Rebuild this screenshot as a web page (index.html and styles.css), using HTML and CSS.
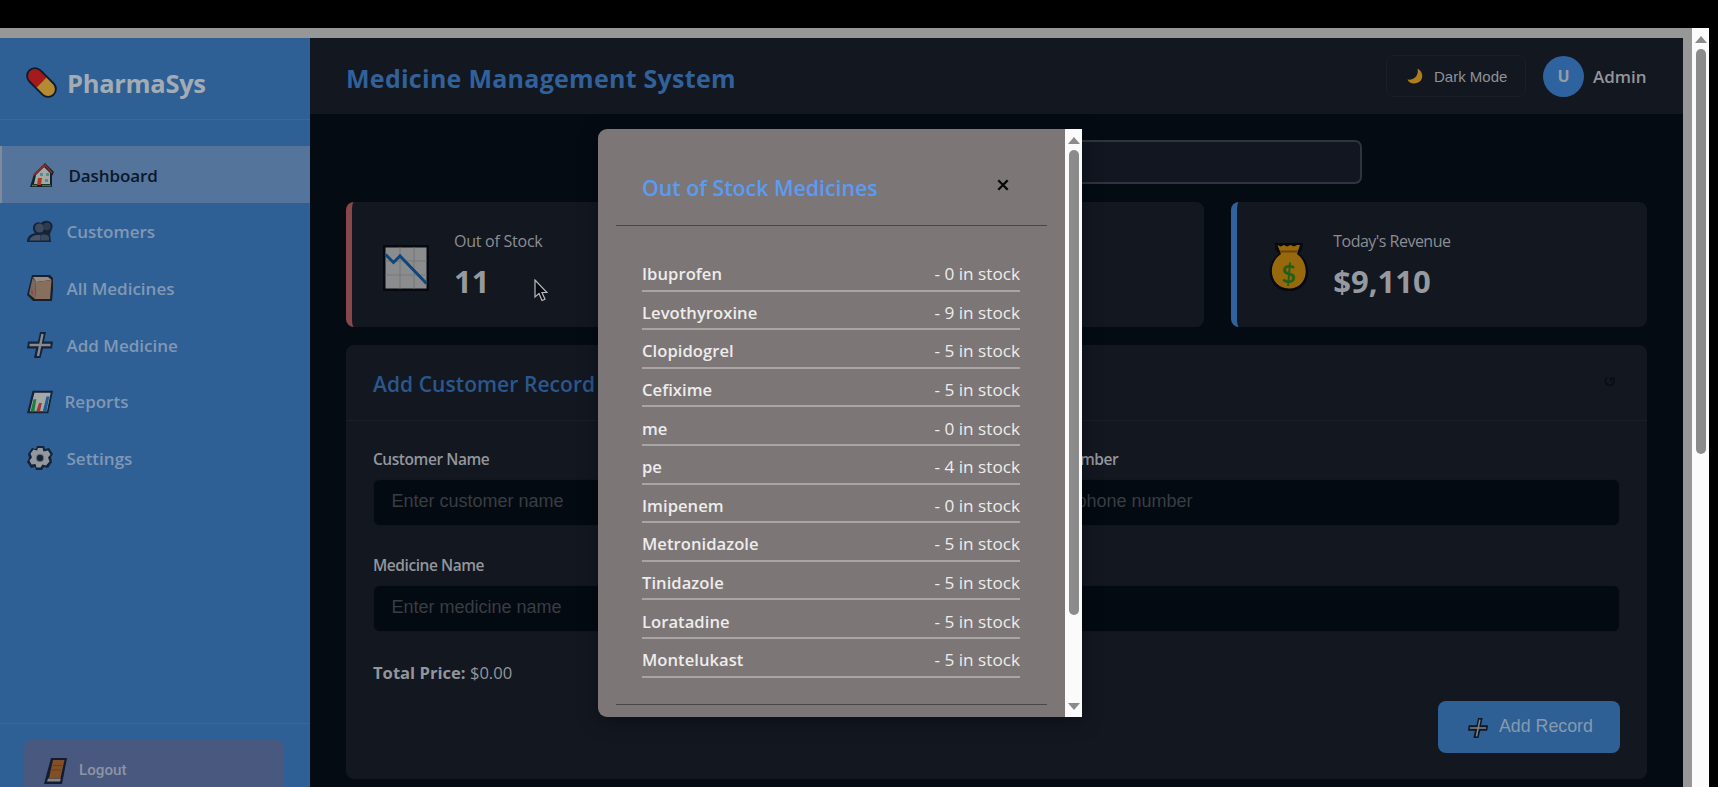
FILE: index.html
```html
<!DOCTYPE html>
<html lang="en">
<head>
<meta charset="utf-8">
<title>PharmaSys</title>
<link rel="stylesheet" href="styles.css">
</head>
<body>
<div class="viewport">
  <div class="app">
    <aside class="sidebar">
      <div class="brand">
        <svg class="brand-icon" viewBox="0 0 32 32"><g transform="rotate(45 16 16)"><rect x="-1.500" y="7.500" width="35" height="17" rx="8.500" fill="#101a2c"/><path d="M16 9.300H7a6.700 6.700 0 0 0 0 13.400H16z" fill="#a31b1c"/><path d="M16 9.300h9a6.700 6.700 0 0 1 0 13.400H16z" fill="#b48a32"/></g></svg>
        <span class="brand-name">PharmaSys</span>
      </div>
      <nav class="menu">
        <a class="item active"><svg class="ico" viewBox="0 0 26 26"><path d="M5 12 16 1l9 9-2 4v11H1z" fill="#15202b"/><path d="M7 13l8-8 6 6v11H5z" fill="#a5a9a4"/><path d="M5 13 16 3l7 8" fill="none" stroke="#8d2a2a" stroke-width="1.800"/><path d="M9 16h4l-1 7H8z" fill="#a83a28"/><path d="M11 11h3v3h-3zM17 11h3v3h-3zM16 17h3v3h-3z" fill="#4c8f9b"/><path d="M3 23.500h5M13 23.500h9" stroke="#3c7a36" stroke-width="1.500"/></svg><span>Dashboard</span></a>
        <a class="item"><svg class="ico" viewBox="0 0 26 26"><path d="M8 14C3 9 8 1 14 4c5-5 14-1 11 6l-2 5 1 8H0c0-5 3-8 8-9z" fill="#152438"/><circle cx="12.500" cy="9" r="4.500" fill="#3c4a5b"/><circle cx="20" cy="7.500" r="3.700" fill="#2d3b4c"/><path d="M2.500 21.500c1-5 6-6 11-5.500v5.500z" fill="#46546a"/><path d="M14 16c5-1 7 0 8 2v3.500h-8z" fill="#39485b"/></svg><span>Customers</span></a>
        <a class="item"><svg class="ico" viewBox="0 0 26 26"><path d="M5 0h18l4 4-2 22H6L0 20z" fill="#17212e"/><path d="M6 2h15l3.500 3L9 7z" fill="#9a8c82"/><path d="M9 7l15.500-2L23 24H8z" fill="#86705d"/><path d="M5.500 3 9 7 8 24l-6-5z" fill="#79695f"/><path d="M4 15l2 1v4l-2-2z" fill="#a3403d"/></svg><span>All Medicines</span></a>
        <a class="item"><svg class="ico" viewBox="0 0 26 26"><path d="M13 0h6l-2 9.500h9l-1 7h-9L13.500 26H7l2-9.500H0l1-7h10z" fill="#14233a"/><path d="M15.500 2 11 24M2.500 13h21" stroke="#898b8e" stroke-width="2.400" fill="none"/></svg><span>Add Medicine</span></a>
        <a class="item"><svg class="ico" viewBox="0 0 28 26"><path d="M6 1h22l-5 24H0z" fill="#14233a"/><path d="M8 3h17.500l-4 20H3z" fill="#a4a8a8"/><path d="M7 10h3L8 23H4z" fill="#18803a"/><path d="M13 14h3l-2 9h-4z" fill="#a33632"/><path d="M21 7h3l-3 16h-4z" fill="#1d5c98"/></svg><span class="nudge">Reports</span></a>
        <a class="item"><svg class="ico" viewBox="0 0 26 26"><path d="M10 1h7l1 3 4-1 4 6-2 3 1 5-4 6-4-1-2 3H9l-1-3-4 1-4-6 2-4-1-4 4-6 4 1z" fill="#14233a"/><path d="M11 3h4.500l1 3.500 4.500-1 2.500 4-2.500 3 1.500 4-3.500 4-3.500-1-2 3h-4l-1-3.500-4 .5-2-4 2.500-3-1.500-4 3-4 3.500 1z" fill="#92989e"/><circle cx="13" cy="13" r="3.800" fill="#14233a" stroke="#6e7680" stroke-width="1"/></svg><span>Settings</span></a>
      </nav>
      <div class="side-foot">
        <div class="logout"><svg class="door" viewBox="0 0 23 26"><path d="M7 0h16l-5 26H0z" fill="#131a33"/><path d="M9 2h11.500L16.500 20H5z" fill="#835026"/><path d="M9 7.500h9M8 12h9" stroke="#6c3d1b" stroke-width="1"/><path d="M4 20.500h13l-1 3H3z" fill="#8c8378"/></svg><span>Logout</span></div>
      </div>
    </aside>
    <main class="main">
      <header class="topbar">
        <h1>Medicine Management System</h1>
        <div class="top-right">
          <div class="mode"><svg class="moon" viewBox="0 0 16 16"><path d="M10.500.5C17 4 16.500 12 11 14.500 7 16.500 2 15.500.5 11.500 7 12.500 12 8 10.500.5z" fill="#b07d1b"/></svg><span>Dark Mode</span></div>
          <div class="avatar">U</div>
          <span class="admin">Admin</span>
        </div>
      </header>
      <div class="content">
        <div class="search"></div>
        <section class="stats">
          <div class="stat red">
            <svg class="chart" viewBox="0 0 46 46"><path d="M0 0h46v46H0z" fill="#06090f"/><path d="M2.500 2.500h41v41h-41z" fill="#8b8c8d"/><path d="M17 2.500v41M31 2.500v41M2.500 16h41M2.500 30h41" stroke="#77797b" stroke-width="1.200"/><path d="M2.500 9.500l8 8L17 11l26.500 27.500" fill="none" stroke="#0d4678" stroke-width="3"/></svg>
            <div><div class="stat-label">Out of Stock</div><div class="stat-num">11</div></div>
          </div>
          <div class="stat"></div>
          <div class="stat blue">
            <svg class="bag" viewBox="0 0 40 50"><path d="M6 1h28l-1 6-3 5c14 9 13 37-10 37S-4 21 10 12L6 7z" fill="#06090f"/><path d="M8.500 3l3 1.500L15 3l3 1.500L21.500 3l3.500 1.500 3-1.500h3l-3 9c14 10 11 34.500-8 34.500S-3 22 12 12z" fill="#98690c"/><path d="M11 9.500h18" stroke="#6f4208" stroke-width="2"/></svg>
            <span class="dollar">$</span>
            <div><div class="stat-label revenue">Today's Revenue</div><div class="stat-num money">$9,110</div></div>
          </div>
        </section>
        <section class="card">
          <div class="card-head"><h2>Add Customer Record</h2><svg class="reset" viewBox="0 0 14 14"><path d="M3.500 2.500A5 5 0 1 0 11 4M8 3h4.500M8 3v4" fill="none" stroke="#080c13" stroke-width="1.800"/></svg></div>
          <div class="form">
            <div class="field"><label>Customer Name</label><input placeholder="Enter customer name"></div>
            <div class="field"><label>Phone Number</label><input placeholder="Enter phone number"></div>
            <div class="field"><label>Medicine Name</label><input placeholder="Enter medicine name"></div>
            <div class="field"><label>Quantity</label><input></div>
          </div>
          <div class="total"><b>Total Price:</b> $0.00</div>
          <div class="actions"><div class="add"><svg class="plus" viewBox="0 0 26 26"><path d="M13 0h6l-2 9.500h9l-1 7h-9L13.500 26H7l2-9.500H0l1-7h10z" fill="#0d1828"/><path d="M15.500 2 11 24M2.500 13h21" stroke="#858381" stroke-width="2" fill="none"/></svg><span>Add Record</span></div></div>
        </section>
      </div>
    </main>
  </div>
  <div class="scroll page-scroll"><i class="up"></i><b class="thumb"></b></div>
</div>

<div class="modal">
  <div class="modal-body">
    <div class="modal-head"><h2>Out of Stock Medicines</h2><svg class="close" viewBox="0 0 12 12"><path d="M1.300 1.300l9.400 9.400M10.700 1.300l-9.400 9.400" stroke="#060606" stroke-width="2.300"/></svg></div>
    <ul class="list">
      <li><b>Ibuprofen</b><span>- 0 in stock</span></li>
      <li><b>Levothyroxine</b><span>- 9 in stock</span></li>
      <li><b>Clopidogrel</b><span>- 5 in stock</span></li>
      <li><b>Cefixime</b><span>- 5 in stock</span></li>
      <li><b>me</b><span>- 0 in stock</span></li>
      <li><b>pe</b><span>- 4 in stock</span></li>
      <li><b>Imipenem</b><span>- 0 in stock</span></li>
      <li><b>Metronidazole</b><span>- 5 in stock</span></li>
      <li><b>Tinidazole</b><span>- 5 in stock</span></li>
      <li><b>Loratadine</b><span>- 5 in stock</span></li>
      <li><b>Montelukast</b><span>- 5 in stock</span></li>
    </ul>
    <div class="modal-foot"></div>
  </div>
  <div class="scroll"><i class="up"></i><b class="thumb"></b><i class="down"></i></div>
</div>
<svg class="cursor" viewBox="0 0 14 23"><path d="M1 1v17l4-3.500 3 7 3-1.300-3-6.700h5z" fill="#06090f" stroke="#b9babc" stroke-width="1.200"/></svg>
</body>
</html>
```
FILE: styles.css
```css
* { box-sizing: border-box; }
body {
  margin: 0;
  height: 787px;
  overflow: hidden;
  background: #000;
  padding: 28px 9px 0 0;
  font-family: "Open Sans", "Noto Sans", sans-serif;
  color: #92969c;
}
h1, h2, ul { margin: 0; padding: 0; }
svg { display: block; flex: none; }
span, h1, h2, label, li { white-space: nowrap; }

.viewport { display: flex; height: 759px; }
.app { flex: 1; display: flex; background: #979797; padding: 10px 9px 0 0; }

.sidebar { width: 310px; background: #2e6096; display: flex; flex-direction: column; }
.brand { height: 82px; display: flex; align-items: center; padding: 8px 0 0 25px; gap: 9px; border-bottom: 1px solid #38689c; }
.brand-icon { width: 33px; height: 33px; }
.brand-name { font-size: 25.500px; font-weight: 700; letter-spacing: -0.3px; color: #a3abb5; }
.menu { padding-top: 26px; display: flex; flex-direction: column; }
.item { height: 56.600px; display: flex; align-items: center; padding: 2px 0 0 27px; gap: 13.500px; font-size: 17px; font-weight: 600; color: #8198b4; }
.item.active { background: #54749b; color: #0b1829; border-left: 2px solid #7d8b9d; letter-spacing: -0.1px; }
.ico { width: 26px; height: 26px; }
.nudge { margin-left: -2px; }
.side-foot { margin-top: auto; height: 64px; border-top: 1px solid #37689d; padding: 16px 26px 0 24px; overflow: hidden; }
.logout { height: 60px; background: #49587f; border-radius: 8px; display: flex; align-items: center; padding-left: 20px; gap: 12px; font: 500 15.200px Roboto, "Liberation Sans", sans-serif; color: #8d94a6; }
.door { width: 23px; height: 26px; margin-top: 1px; }

.main { flex: 1; background: #040b13; }
.topbar { height: 76px; background: #131720; display: flex; align-items: center; justify-content: space-between; padding: 0 36px; }
h1 { font-size: 25px; font-weight: 700; letter-spacing: 0.270px; color: #31619a; line-height: 32px; padding-top: 4px; }
.top-right { display: flex; align-items: center; }
.mode { width: 140px; height: 42px; border: 1px solid #1a1e28; border-radius: 7px; display: flex; align-items: center; gap: 11px; padding-left: 20px; font: 500 15px "Liberation Sans", sans-serif; color: #8f9297; margin-right: 17px; }
.moon { width: 16px; height: 16px; }
.avatar { width: 41px; height: 41px; border-radius: 50%; background: #2e639f; display: flex; align-items: center; justify-content: center; font-size: 16px; font-weight: 700; color: #959da7; }
.admin { margin-left: 9px; font-size: 17px; font-weight: 600; width: 54px; padding-top: 1px; }

.content { padding: 26px 36px 0; }
.search { width: 731px; height: 44px; margin: 0 auto; border: 2px solid #30353d; border-radius: 7px; background: #111620; }
.stats { display: grid; grid-template-columns: 1fr 1fr 1fr; gap: 27px; margin-top: 17.500px; }
.stat { position: relative; height: 125px; background: #131720; border-radius: 8px; display: flex; align-items: center; }
.stat.red { border-left: 6px solid #89474a; }
.stat.blue { border-left: 6px solid #32629b; }
.chart { width: 46px; height: 46px; margin: 8px 25px 0 31px; }
.bag { width: 40px; height: 50px; margin: 5px 24px 0 32px; }
.dollar { position: absolute; left: 44px; top: 55px; font: 700 25px/32px Lato, sans-serif; color: #216018; }
.stat-label { font-size: 16px; font-weight: 500; line-height: 24px; letter-spacing: -0.250px; color: #8b8e93; margin-top: 2px; }
.stat-label.revenue { letter-spacing: -0.520px; }
.stat-num { font-size: 31px; font-weight: 700; line-height: 42px; margin-top: 7px; color: #969a9f; }

.card { height: 434px; margin-top: 18.500px; background: #131720; border-radius: 8px; padding-top: 1px; }
.card-head { height: 75px; border-bottom: 1px solid #1a1f29; padding: 0 31px 0 27px; display: flex; justify-content: space-between; align-items: center; }
.card-head h2 { font-size: 21px; font-weight: 600; letter-spacing: 0.060px; color: #2b578c; padding-top: 2px; }
.reset { width: 12px; height: 13px; margin-bottom: 3px; }
.form { display: grid; grid-template-columns: 1fr 1fr; column-gap: 27px; padding: 26px 27px 0; }
.field { height: 106px; display: flex; flex-direction: column; }
label { font-size: 15.500px; font-weight: 600; letter-spacing: -0.450px; line-height: 24px; margin-bottom: 8px; }
input { height: 47px; border: 1px solid #10151e; border-radius: 7px; background: #040a12; padding: 0 18px 2px 17.500px; font: 18px "Liberation Sans", sans-serif; color: #92969c; }
input::placeholder { color: #3a3d42; opacity: 1; }
.total { padding-left: 27px; font-size: 16.600px; line-height: 24px; margin-top: 2px; }
.actions { display: flex; justify-content: flex-end; padding: 16px 27px 0; }
.add { width: 182px; height: 52px; border-radius: 8px; background: #2e6096; display: flex; align-items: center; padding-left: 30px; gap: 11px; font: 500 17.800px "Liberation Sans", sans-serif; color: #8799af; }
.add span { padding-bottom: 1px; }
.plus { width: 20px; height: 20px; margin-top: 2px; }

.scroll { width: 17px; background: #fbfbfb; display: flex; flex-direction: column; align-items: center; }
.up { border: 6px solid transparent; border-bottom: 7px solid #8b8b8b; border-top: 0; margin-top: 8px; }
.down { border: 6px solid transparent; border-top: 7px solid #8b8b8b; border-bottom: 0; margin: auto 0 7px; }
.thumb { width: 10px; height: 465px; margin-top: 6px; border-radius: 5px; background: #8b8b8b; }
.page-scroll .thumb { height: 405px; }

.modal { position: absolute; left: 598px; top: 129px; width: 484px; height: 588px; display: flex; background: #7c7676; border-radius: 9px 0 0 9px; overflow: hidden; box-shadow: 0 4px 20px rgba(0,0,0,.35); }
.modal-body { flex: 1; padding: 18px; }
.modal-head { height: 79px; border-bottom: 1px solid #4a4547; padding: 0 38px 0 26px; display: flex; justify-content: space-between; align-items: center; }
.modal-head h2 { font-size: 21.300px; font-weight: 600; color: #5a9cf5; line-height: 28px; margin-top: 3px; }
.close { width: 12px; height: 12px; margin-bottom: 2px; }
.list { list-style: none; padding: 27px 27px 0 26px; color: #eeecec; }
.list li { height: 38.600px; border-bottom: 2px solid #aaa5a5; display: flex; justify-content: space-between; align-items: center; font-size: 16.600px; padding-top: 5px; }
.list b { font-weight: 600; letter-spacing: 0.040px; }
.list span { font-size: 17.200px; }
.modal-foot { margin-top: 26px; border-top: 1px solid #4a4547; }

.cursor { position: absolute; left: 534px; top: 279px; width: 14px; height: 23px; }
```
